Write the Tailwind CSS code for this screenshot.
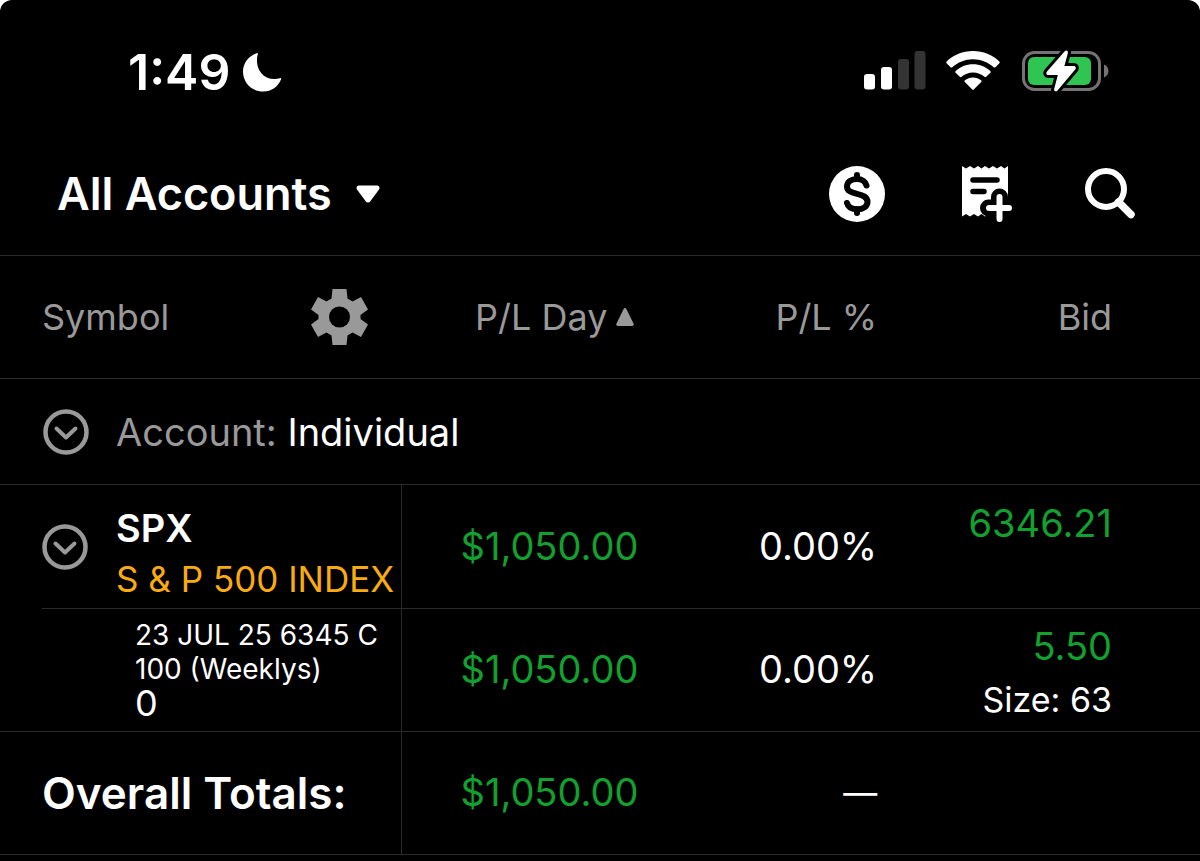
<!DOCTYPE html>
<html lang="en" class="bg-white">
<head>
  <meta charset="UTF-8" />
  <meta name="viewport" content="width=device-width, initial-scale=1.0"/>
  <title>All Accounts</title>
  <script src="https://cdn.jsdelivr.net/npm/@tailwindcss/browser@4"></script>
</head>
<body class="bg-white">
  <div class="min-h-screen overflow-hidden rounded-t-xl bg-black font-['Inter',sans-serif] text-white">

    <!-- Status bar -->
    <div class="flex h-36 items-center justify-between pl-32 pr-[90px]">
      <div class="flex items-center gap-3">
        <span class="text-[50px] leading-none font-semibold">1:49</span>
        <svg class="h-10 w-10" viewBox="0 0 40 40" fill="#fff" aria-hidden="true">
          <path d="M14.6 1.2C15.600 .8 16.100 1.400 15.800 2.300C12.500 13.500 18.500 27 32.500 27C34.500 27 36.300 26.700 37.700 26.200C38.800 25.800 39.500 26.400 39 27.500C36.200 34.500 29.500 39.600 21.300 39.600C10 39.600 1 31 1 19.500C1 11 6.500 4 14.600 1.200Z"/>
        </svg>
      </div>
      <div class="flex items-center gap-5 pb-[2px]">
        <svg class="h-10 w-[64px]" viewBox="0 0 64 40" aria-hidden="true">
          <rect x="2" y="23" width="11" height="15.500" rx="3" fill="#fff"/>
          <rect x="19" y="16" width="11" height="22.500" rx="3" fill="#fff"/>
          <rect x="36" y="8" width="11" height="30.500" rx="3" fill="#333"/>
          <rect x="52.500" y="0" width="11" height="38.500" rx="3" fill="#333"/>
        </svg>
        <svg class="h-10 w-[54px]" viewBox="0 0 54 40" fill="#fff" aria-hidden="true">
          <path d="M27 0C37.200 0 46.500 3.900 53.300 10.400C53.900 11 53.900 11.700 53.400 12.300L49.500 16.200C49 16.700 48.300 16.700 47.700 16.200C42.300 11.200 35 8.200 27 8.200C19 8.200 11.700 11.200 6.300 16.200C5.700 16.700 5 16.700 4.500 16.200L.6 12.300C.1 11.700 .1 11 .7 10.400C7.500 3.900 16.800 0 27 0Z"/>
          <path d="M27 13.200C33.700 13.200 39.800 15.800 44.300 19.900C44.900 20.500 44.900 21.200 44.400 21.700L40.200 25.800C39.700 26.300 39.100 26.300 38.500 25.800C35.400 23 31.400 21.400 27 21.400C22.600 21.400 18.600 23 15.500 25.800C14.900 26.300 14.300 26.300 13.800 25.800L9.600 21.700C9.100 21.200 9.100 20.500 9.700 19.900C14.200 15.800 20.300 13.200 27 13.200Z"/>
          <path d="M27 26.400C30.100 26.400 32.900 27.500 35.100 29.300C35.700 29.800 35.700 30.400 35.200 30.900L28 38.200C27.400 38.900 26.600 38.900 26 38.200L18.800 30.900C18.300 30.400 18.300 29.800 18.900 29.300C21.100 27.500 23.900 26.400 27 26.400Z"/>
        </svg>
        <svg class="h-[44px] w-[90px]" viewBox="0 0 90 44" aria-hidden="true">
          <rect x="3.500" y="3.500" width="76" height="37" rx="11" fill="none" stroke="#757175" stroke-width="3"/>
          <path d="M84 15.500C86.500 16.500 88.500 19 88.500 22C88.500 25 86.500 27.500 84 28.500Z" fill="#757175"/>
          <rect x="8" y="8" width="63" height="28" rx="6" fill="#30c552"/>
          <path d="M44.500 2.500C45.800 .8 48.400 1.700 47.900 4L44.400 17H53.500C55.700 17 56.500 18.900 55.200 20.500L37.500 41.500C36.200 43.200 33.600 42.200 34.200 40L37.800 26H28.500C26.500 26 25.600 24 27 22.400Z" fill="#fff" stroke="#000" stroke-width="6" paint-order="stroke" stroke-linejoin="round"/>
        </svg>
      </div>
    </div>

    <!-- Title bar -->
    <header class="flex h-28 items-center justify-between border-b border-[#2b2b2b] pr-[62px] pb-3 pl-[57px]">
      <button type="button" class="flex items-center gap-6 text-[45px] leading-none font-semibold">
        All Accounts
        <svg class="h-5 w-6" viewBox="0 0 24 20" fill="#fff" aria-hidden="true">
          <path d="M3 1.500H21C23.200 1.500 24.200 3.800 23 5.500L14.300 17.300C13.100 18.900 10.900 18.900 9.700 17.300L1 5.500C-.2 3.800 .8 1.500 3 1.500Z"/>
        </svg>
      </button>
      <nav class="flex items-center gap-[68px]">
        <button type="button" aria-label="Trade">
          <svg class="size-[58px]" viewBox="0 0 58 58" aria-hidden="true">
            <circle cx="29" cy="29" r="28" fill="#fff"/>
            <path d="M38.500 20.500C37.500 16.500 33.500 14 29 14C23.500 14 19 16.800 19 21.500C19 26 23 27.300 29 28.800C35 30.300 39.500 32 39.500 37C39.500 41.500 35 44.300 29.500 44.300C24 44.300 20 42 19 38M29 10V14M29 44V48" fill="none" stroke="#000" stroke-width="6" stroke-linecap="round" stroke-linejoin="round"/>
          </svg>
        </button>
        <button type="button" aria-label="New order">
          <svg class="size-[58px]" viewBox="-4 0 58 58" aria-hidden="true">
            <path d="M4 1L8 3.500L12 1L16 3.500L20 1L23.500 3.500L27 1L31 3.500L35 1L39 3.500L43 1L46.500 3.500L50 1V51.500L46.500 49L43 51.500L39 49L35 51.500L31 49L27 51.500L23.500 49L20 51.500L16 49L12 51.500L8 49L4 51.500Z" fill="#fff"/>
            <path d="M15 15H39M15 26.500H26" stroke="#000" stroke-width="5.500" stroke-linecap="round"/>
            <path d="M41.500 32V54M30.500 43H52.500" stroke="#000" stroke-width="17" stroke-linecap="round"/>
            <path d="M41.500 32V54M31 43H51" stroke="#fff" stroke-width="6" stroke-linecap="round"/>
          </svg>
        </button>
        <button type="button" aria-label="Search">
          <svg class="size-[58px]" viewBox="0 0 58 58" fill="none" stroke="#fff" aria-hidden="true">
            <circle cx="26" cy="24" r="18" stroke-width="6"/>
            <path d="M38.500 37L51 49.500" stroke-width="7.500" stroke-linecap="round"/>
          </svg>
        </button>
      </nav>
    </header>

    <!-- Positions -->
    <table class="w-full table-fixed border-separate border-spacing-0 text-[38px] leading-[44px]">
      <colgroup>
        <col class="w-[33.5%]">
        <col class="w-[19.7%]">
        <col class="w-[19.9%]">
        <col>
      </colgroup>
      <thead>
        <tr class="h-[123px] text-[36px] text-[#999]">
          <th scope="col" class="border-b border-[#2b2b2b] pr-[33px] pl-[42px] text-left font-normal">
            <div class="flex items-center justify-between">
              Symbol
              <button type="button" aria-label="Column settings">
                <svg class="size-[60px]" viewBox="0 0 60 60" aria-hidden="true">
                  <path d="M23.500 2H37.500L38.500 11.500L43.500 14.400L52 10L59 22.500L51.500 28V32L59 37.500L52 50L43.500 45.600L38.500 48.500L37.500 58H23.500L22.500 48.500L17.500 45.600L9 50L2 37.500L9.500 32V28L2 22.500L9 10L17.500 14.400L22.500 11.500Z" fill="#999"/>
                  <circle cx="30.500" cy="30" r="10.500" fill="#000"/>
                </svg>
              </button>
            </div>
          </th>
          <th scope="col" class="border-b border-[#2b2b2b] pr-[3px] font-normal">
            <button type="button" class="ml-auto flex items-center gap-2">
              P/L Day
              <svg class="h-5 w-5" viewBox="0 0 20 20" fill="#999" aria-hidden="true">
                <path d="M8.600 2C9.300 .7 10.700 .7 11.400 2L18.500 16.500C19.200 18 18.500 19 17 19H3C1.500 19 .8 18 1.500 16.500Z"/>
              </svg>
            </button>
          </th>
          <th scope="col" class="border-b border-[#2b2b2b] text-right font-normal">P/L %</th>
          <th scope="col" class="border-b border-[#2b2b2b] pr-[88px] text-right font-normal">Bid</th>
        </tr>
      </thead>
      <tbody>
        <tr class="h-[106px]">
          <td colspan="4" class="border-b border-[#2b2b2b] pl-[42px]">
            <div class="flex items-center gap-[26px]">
              <button type="button" aria-label="Collapse account">
                <svg class="size-12" viewBox="0 0 48 48" fill="none" stroke="#999" aria-hidden="true">
                  <circle cx="24" cy="24" r="20.500" stroke-width="4.500"/>
                  <path d="M14.500 20.500L24 29.500L33.500 20.500" stroke-width="4" stroke-linecap="round" stroke-linejoin="round"/>
                </svg>
              </button>
              <p><span class="text-[#999]">Account:</span> Individual</p>
            </div>
          </td>
        </tr>
        <tr class="h-[124px]">
          <td class="h-[124px] border-r border-[#2b2b2b] pl-[42px]">
            <div class="flex h-[124px] items-center gap-[26px] border-b border-[#2b2b2b]">
              <button type="button" aria-label="Collapse SPX" class="shrink-0">
                <svg class="size-12" viewBox="0 0 48 48" fill="none" stroke="#999" aria-hidden="true">
                  <circle cx="23" cy="24" r="20.500" stroke-width="4.500"/>
                  <path d="M13.500 20.500L23 29.500L32.500 20.500" stroke-width="4" stroke-linecap="round" stroke-linejoin="round"/>
                </svg>
              </button>
              <div class="pt-3 whitespace-nowrap">
                <p class="leading-[52px] font-semibold">SPX</p>
                <p class="text-[35px] leading-[50px] text-[#f9ab10]">S &amp; P 500 INDEX</p>
              </div>
            </div>
          </td>
          <td class="border-b border-[#2b2b2b] pb-[2px] text-right text-[#12a12f]">$1,050.00</td>
          <td class="border-b border-[#2b2b2b] pb-[2px] text-right">0.00%</td>
          <td class="border-b border-[#2b2b2b] pt-4 pr-[88px] text-right align-top text-[#12a12f]">6346.21</td>
        </tr>
        <tr class="h-[123px]">
          <td class="border-r border-b border-[#2b2b2b] pb-[2px] pl-[135px] whitespace-nowrap">
            <p class="text-[28px] leading-[34px]">23 JUL 25 6345 C</p>
            <p class="text-[28px] leading-[34px]">100 (Weeklys)</p>
            <p class="text-[36px] leading-[34px]">0</p>
          </td>
          <td class="border-b border-[#2b2b2b] pb-[2px] text-right text-[#12a12f]">$1,050.00</td>
          <td class="border-b border-[#2b2b2b] pb-[2px] text-right">0.00%</td>
          <td class="border-b border-[#2b2b2b] pt-[15px] pr-[88px] text-right align-top">
            <p class="text-[#12a12f]">5.50</p>
            <p class="pt-[10px] text-[34px]">Size: 63</p>
          </td>
        </tr>
      </tbody>
      <tfoot>
        <tr class="h-[123px]">
          <th scope="row" class="border-r border-b border-[#2b2b2b] pl-[42px] text-left text-[44px] font-semibold whitespace-nowrap">Overall Totals:</th>
          <td class="border-b border-[#2b2b2b] pb-[2px] text-right text-[#12a12f]">$1,050.00</td>
          <td class="border-b border-[#2b2b2b] text-right text-[34px]">—</td>
          <td class="border-b border-[#2b2b2b]"></td>
        </tr>
      </tfoot>
    </table>
  </div>
</body>
</html>
